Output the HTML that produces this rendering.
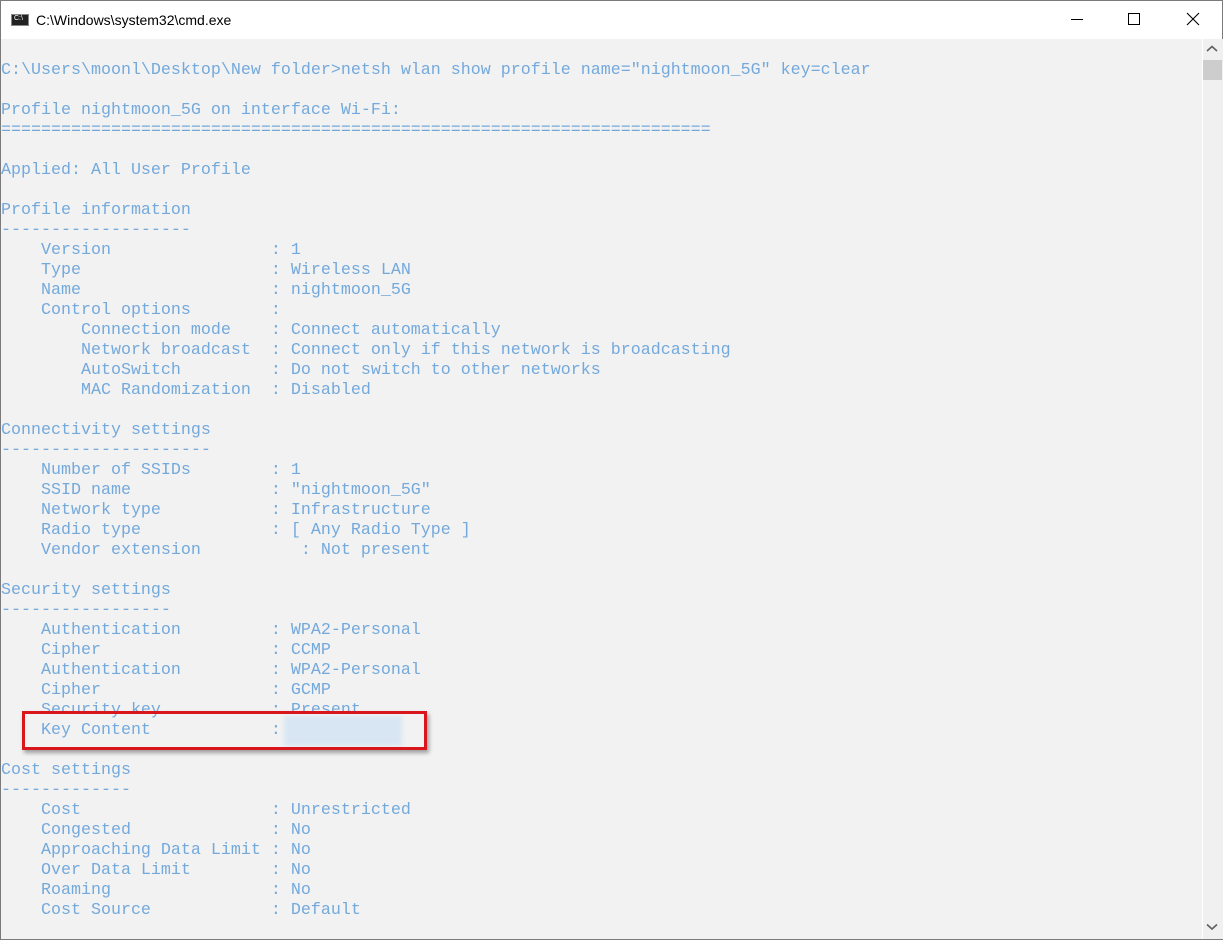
<!DOCTYPE html>
<html><head><meta charset="utf-8"><style>
html,body{margin:0;padding:0;}
body{width:1223px;height:940px;position:relative;overflow:hidden;background:#f2f2f2;}
.win{position:absolute;left:0;top:0;width:1221px;height:938px;border:1px solid #7a7a7a;background:#f2f2f2;}
.title{position:absolute;left:0;top:0;width:1221px;height:38px;background:#fff;}
.title .t{position:absolute;left:35px;top:11px;font:14px "Liberation Sans",sans-serif;color:#000;}
.ico{position:absolute;left:10px;top:13px;width:18px;height:12px;background:#222;border:1px solid #888;box-sizing:border-box;}
.ico:after{content:"C:\\";position:absolute;left:2px;top:0px;font:7px "Liberation Sans",sans-serif;color:#fff;}
.ctl{position:absolute;top:10px;}
pre{position:absolute;left:1px;top:61px;margin:0;font-family:"Liberation Mono",monospace;font-size:16.67px;line-height:20px;color:#74a9dc;letter-spacing:0;}
.sb{position:absolute;left:1201px;top:38px;width:20px;height:900px;background:#f0f0f0;border-left:1px solid #fff;}
.thumb{position:absolute;left:1202px;top:59px;width:19px;height:20px;background:#cdcdcd;}
.box{position:absolute;left:22px;top:711px;width:405px;height:39px;border:3px solid #d9161c;box-sizing:border-box;box-shadow:2px 3px 4px rgba(0,0,0,.35);}
.blur{position:absolute;left:284px;top:716px;width:118px;height:30px;background:#d8e6f3;filter:blur(2px);}
</style></head><body>
<div class="win">
<div class="title"><div class="ico"></div><div class="t">C:\Windows\system32\cmd.exe</div>
<svg class="ctl" style="left:1068px" width="16" height="16"><line x1="2" y1="8.5" x2="14" y2="8.5" stroke="#000" stroke-width="1"/></svg>
<svg class="ctl" style="left:1126px" width="16" height="16"><rect x="1.5" y="2.5" width="11" height="11" fill="none" stroke="#000"/></svg>
<svg class="ctl" style="left:1184px" width="16" height="16"><path d="M2 2L14 14M14 2L2 14" stroke="#000" stroke-width="1.1"/></svg>
</div>
<div class="sb"></div><div class="thumb"></div>
<svg style="position:absolute;left:1205px;top:44px" width="12" height="8"><path d="M1 6L6 1.5L11 6" fill="none" stroke="#606060" stroke-width="1.6"/></svg>
<svg style="position:absolute;left:1205px;top:922px" width="12" height="8"><path d="M1 1.5L6 6L11 1.5" fill="none" stroke="#606060" stroke-width="1.6"/></svg>
</div>
<div class="blur"></div>
<pre>C:\Users\moonl\Desktop\New folder>netsh wlan show profile name="nightmoon_5G" key=clear

Profile nightmoon_5G on interface Wi-Fi:
=======================================================================

Applied: All User Profile

Profile information
-------------------
    Version                : 1
    Type                   : Wireless LAN
    Name                   : nightmoon_5G
    Control options        :
        Connection mode    : Connect automatically
        Network broadcast  : Connect only if this network is broadcasting
        AutoSwitch         : Do not switch to other networks
        MAC Randomization  : Disabled

Connectivity settings
---------------------
    Number of SSIDs        : 1
    SSID name              : "nightmoon_5G"
    Network type           : Infrastructure
    Radio type             : [ Any Radio Type ]
    Vendor extension          : Not present

Security settings
-----------------
    Authentication         : WPA2-Personal
    Cipher                 : CCMP
    Authentication         : WPA2-Personal
    Cipher                 : GCMP
    Security key           : Present
    Key Content            :

Cost settings
-------------
    Cost                   : Unrestricted
    Congested              : No
    Approaching Data Limit : No
    Over Data Limit        : No
    Roaming                : No
    Cost Source            : Default</pre>
<div class="box"></div>
</body></html>
